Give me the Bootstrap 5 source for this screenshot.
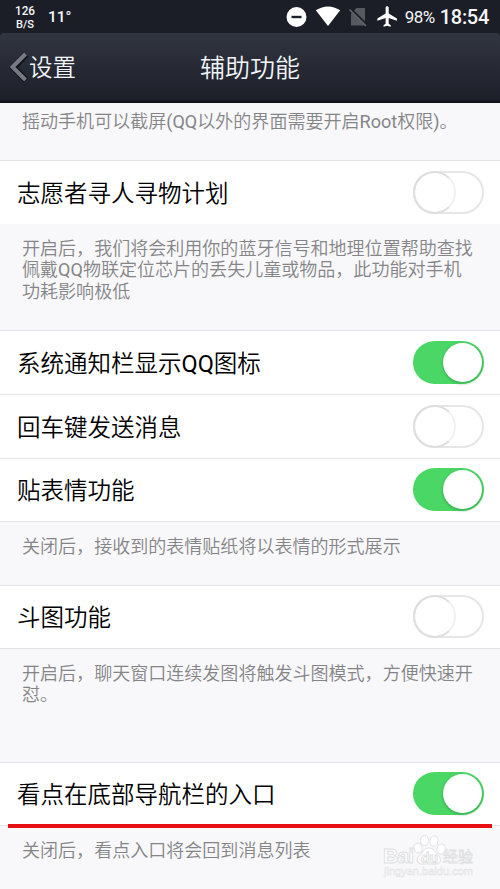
<!DOCTYPE html>
<html lang="zh-CN">
<head>
<meta charset="utf-8">
<meta name="viewport" content="width=device-width, initial-scale=1">
<title>辅助功能</title>
<link href="https://cdn.jsdelivr.net/npm/bootstrap@5.3.0/dist/css/bootstrap.min.css" rel="stylesheet">
<style>
body{font-family:Roboto,"Noto Sans CJK SC DemiLight","Noto Sans CJK SC",sans-serif;font-weight:350;background:#f8f8fb;color:#000;height:889px;overflow:hidden}
.statusbar{height:33px;background:#1b1e26;color:#f6f6f8}
.speed{width:30px;margin-left:10px}
.temp{font-size:15.5px;font-weight:500;line-height:30px;margin-left:8px}
.battery{font-size:17px;font-weight:400;line-height:34px;letter-spacing:-.5px}
.clock{font-size:20px;font-weight:500;line-height:34px;letter-spacing:-.3px}
.titlebar{height:70px;background:linear-gradient(#313540,#1d2029 95%,#0c0e13);border-radius:4px 4px 0 0;color:#f1f4f8}
.topwrap{background:#1b1e26}
.back-label{font-size:23.5px;line-height:70px;margin-left:-1px}
.title{font-size:25px;line-height:72px}
.note{font-size:18.05px;line-height:21.4px;color:#858587;padding:14px 20px 0 22px}
.setting{height:64px;background:#fff;border-top:1px solid #e3e3e6;padding:0 16px 0 17px;font-size:23.5px;line-height:62px}
.setting>span:first-child{padding-top:2px}
.setting.closing{border-bottom:1px solid #e3e3e6}
.toggle{width:71px;height:43px;border-radius:22px;flex:none;margin-bottom:1px}
.toggle.off{border:2px solid #e6e6e6;background:#fff}
.toggle.off i{display:block;width:43px;height:43px;margin:-2px;border-radius:50%;border:2px solid #dedede;border-right-color:#f1f1f1}
.toggle.on{background:#4bd765;padding:2px}
.toggle.on i{display:block;width:39px;height:39px;margin-left:auto;border-radius:50%;background:#fff;box-shadow:0 1px 2px 1px #35a35099}
.underline-mark{left:8px;top:824px;width:484px;height:4px;background:#e60f12}
.watermark{left:382px;top:833px}
</style>
</head>
<body>
<div class="topwrap">
<header class="statusbar d-flex align-items-center">
  <svg class="speed" height="33" viewBox="0 0 30 33" fill="#f6f6f8" font-family="Roboto" font-weight="500"><text x="5" y="15" font-size="13.500" textLength="20" lengthAdjust="spacingAndGlyphs">126</text><text x="6" y="28" font-size="10.500" textLength="18" lengthAdjust="spacingAndGlyphs">B/S</text></svg>
  <div class="temp">11°</div>
  <div class="ms-auto d-flex align-items-center">
    <svg width="112" height="33" viewBox="286 0 112 33">
      <circle cx="296.5" cy="17" r="10" fill="#fff"/><path d="M291.5 17h10" stroke="#1b1e26" stroke-width="2.4"/>
      <path d="M315.8 10.3Q328 2.5 340.2 10.3L328 26Z" fill="#fff"/>
      <path d="M356.5 8H365V25.5H351V13.5Z" fill="#575961"/><path d="M350 8.5L368 26.5" stroke="#1b1e26" stroke-width="3"/><path d="M349.5 9.5L366 26" stroke="#666870" stroke-width="1.6"/>
      <path transform="translate(375.3 4.2) scale(1.03)" d="M21 16v-2l-8-5V3.500c0-.83-.67-1.500-1.500-1.500S10 2.670 10 3.500V9l-8 5v2l8-2.500V19l-2 1.500V22l3.500-1 3.500 1v-1.500L13 19v-5.500l8 2.500z" fill="#fff"/>
    </svg>
    <span class="battery" style="margin-left:7px">98%</span>
    <span class="clock" style="margin-left:5px;margin-right:11px">18:54</span>
  </div>
</header>
<nav class="titlebar position-relative d-flex">
  <svg width="30" height="70" viewBox="0 0 30 70"><path d="M26 21.500L13.500 34.500L26 47.500" fill="none" stroke="#12141a" stroke-width="6.500"/><path d="M25.500 21L12.500 34L25.500 47" fill="none" stroke="#777a82" stroke-width="4"/></svg>
  <span class="back-label">设置</span>
  <span class="title position-absolute top-0 start-50 translate-middle-x text-nowrap">辅助功能</span>
</nav>
</div>
<main>
  <div class="note" style="height:57px;padding-top:8px">摇动手机可以截屏<span class="fw-normal">(QQ</span>以外的界面需要开启<span class="fw-normal">Root</span>权限<span class="fw-normal">)</span>。</div>
  <div class="setting d-flex justify-content-between align-items-center"><span>志愿者寻人寻物计划</span><span class="toggle off"><i></i></span></div>
  <div class="note" style="height:106px">开启后，我们将会利用你的蓝牙信号和地理位置帮助查找<br>佩戴<span class="fw-normal">QQ</span>物联定位芯片的丢失儿童或物品，此功能对手机<br>功耗影响极低</div>
  <div class="setting d-flex justify-content-between align-items-center"><span>系统通知栏显示<span class="fw-normal">QQ</span>图标</span><span class="toggle on"><i></i></span></div>
  <div class="setting d-flex justify-content-between align-items-center"><span>回车键发送消息</span><span class="toggle off"><i></i></span></div>
  <div class="setting closing d-flex justify-content-between align-items-center"><span>贴表情功能</span><span class="toggle on"><i></i></span></div>
  <div class="note" style="height:63px">关闭后，接收到的表情贴纸将以表情的形式展示</div>
  <div class="setting closing d-flex justify-content-between align-items-center"><span>斗图功能</span><span class="toggle off"><i></i></span></div>
  <div class="note" style="height:113px">开启后，聊天窗口连续发图将触发斗图模式，方便快速开<br>怼。</div>
  <div class="setting closing d-flex justify-content-between align-items-center"><span>看点在底部导航栏的入口</span><span class="toggle on"><i></i></span></div>
  <div class="note" style="height:63px">关闭后，看点入口将会回到消息列表</div>
</main>
<div class="underline-mark position-absolute"></div>
<svg class="watermark position-absolute" width="100" height="50" viewBox="0 0 100 50">
  <g fill="#fff" stroke="#e0e0e3" stroke-width="1">
    <text x="1" y="30" font-family="Liberation Sans" font-weight="bold" font-size="21" textLength="31">Bai</text>
    <ellipse cx="36" cy="15" rx="4" ry="5" transform="rotate(-15 36 15)"/><ellipse cx="42.500" cy="7.500" rx="4" ry="5"/><ellipse cx="52" cy="8" rx="4" ry="5" transform="rotate(10 52 8)"/><ellipse cx="59" cy="16" rx="4" ry="5" transform="rotate(20 59 16)"/>
    <path d="M47 15C41 15 41 20 37 23C33 27 36 32 42 31H52C58 32 61 27 56 22C52 19 52 15 47 15Z"/>
    <text x="39" y="30" font-family="Liberation Sans" font-weight="bold" font-size="14">du</text>
    <text x="61" y="29" font-family="Noto Sans CJK SC" font-weight="400" font-size="15" stroke-width=".8">经验</text>
    <text x="2" y="42" font-family="Liberation Sans" font-size="11" stroke-width=".5" textLength="89">jingyan.baidu.com</text>
  </g>
</svg>
<script src="https://cdn.jsdelivr.net/npm/bootstrap@5.3.0/dist/js/bootstrap.bundle.min.js"></script>
</body>
</html>
